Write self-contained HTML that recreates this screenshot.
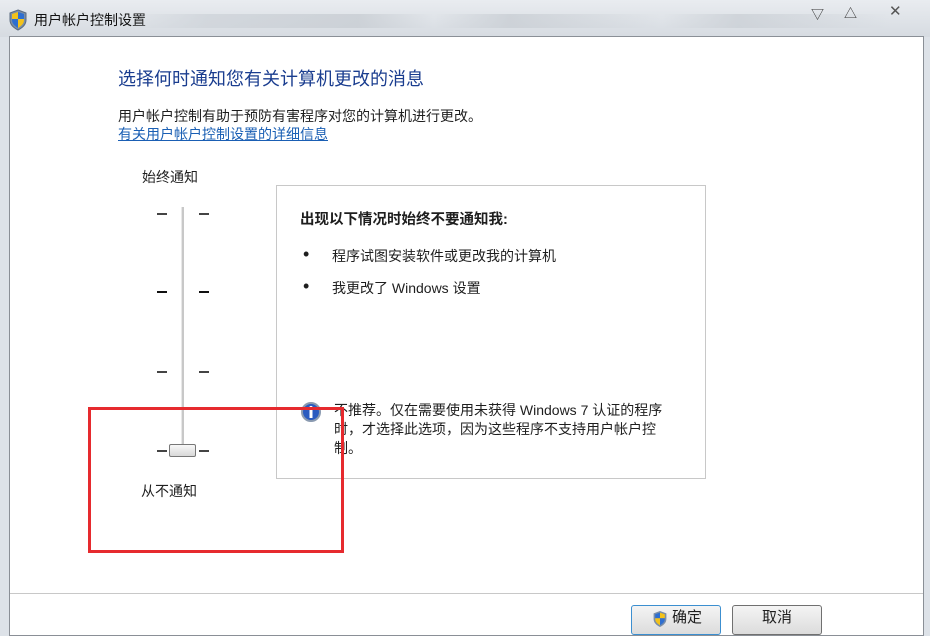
<!DOCTYPE html>
<html><head><meta charset="utf-8"><style>
*{margin:0;padding:0;box-sizing:border-box}
body{width:930px;height:624px;overflow:hidden;background:#dde2e8;font-family:"Liberation Sans","Noto Sans CJK SC",sans-serif;font-size:14px;color:#1e1e1e;position:relative}
.a{position:absolute}
.tb{left:0;top:0;width:930px;height:37px;background:linear-gradient(#e9ecf0,#d6dbe1)}
.client{left:9px;top:36px;width:915px;height:600px;background:#fff;border:1px solid #8a8f96}
.tick{position:absolute;width:10px;height:1.5px;background:#444}
.tick.b{height:2px;background:#111}
.btn{position:absolute;top:605px;height:30px;border:1px solid #707070;border-radius:3px;background:linear-gradient(#f4f4f4,#dcdcdc);font-size:15px;text-align:center;line-height:24px}
</style></head><body>
<div class="a tb"></div>
<svg class="a" style="left:8px;top:9px" width="20" height="22" viewBox="0 0 20 22"><path d="M10 1 L18 4 V11 C18 16 14 19 10 21 C6 19 2 16 2 11 V4 Z" fill="#7a8ea8" stroke="#5b6b80"/><path d="M10 3 L16 5 V10 H10Z" fill="#2f6fd0"/><path d="M4 5 L10 3 V10 H4Z" fill="#f3c21a"/><path d="M10 10 H16 V11 C16 15 13 17 10 19Z" fill="#f3c21a"/><path d="M4 10 H10 V19 C7 17 4 15 4 11Z" fill="#2f6fd0"/></svg>
<div class="a" style="left:34px;top:10px;font-size:14px;color:#111">用户帐户控制设置</div>
<div class="a" style="left:130px;top:14px;width:760px;height:14px;background:linear-gradient(90deg,transparent,#cfd4da 10%,#c8cdd3 30%,transparent 40%,#c9ced4 50%,transparent 70%,#cbd0d6 80%,transparent);opacity:.8"></div>
<div class="a" style="left:811px;top:4px;font-size:13px;color:#333">▽</div>
<div class="a" style="left:844px;top:3px;font-size:13px;color:#333">△</div>
<div class="a" style="left:889px;top:2px;font-size:15px;color:#555">✕</div>
<div class="a client"></div>
<div class="a" style="left:118px;top:65px;font-size:18px;color:#1a3d8f">选择何时通知您有关计算机更改的消息</div>
<div class="a" style="left:118px;top:106px;font-size:14px">用户帐户控制有助于预防有害程序对您的计算机进行更改。</div>
<div class="a" style="left:118px;top:124px;font-size:14px;color:#1a5fb4;text-decoration:underline">有关用户帐户控制设置的详细信息</div>
<div class="a" style="left:142px;top:167px">始终通知</div>
<div class="a" style="left:181px;top:207px;width:3px;height:243px;background:#c8c8c8;border-left:1px solid #e8e8e8"></div>
<div class="tick" style="left:157px;top:213px"></div><div class="tick" style="left:199px;top:213px"></div>
<div class="tick b" style="left:157px;top:291px"></div><div class="tick b" style="left:199px;top:291px"></div>
<div class="tick" style="left:157px;top:371px"></div><div class="tick" style="left:199px;top:371px"></div>
<div class="tick" style="left:157px;top:450px"></div><div class="tick" style="left:199px;top:450px"></div>
<div class="a" style="left:169px;top:444px;width:27px;height:13px;border:1px solid #777;border-radius:2px;background:linear-gradient(#f8f8f8,#d8d8d8)"></div>
<div class="a" style="left:141px;top:481px">从不通知</div>
<div class="a" style="left:276px;top:185px;width:430px;height:294px;border:1px solid #c8c8c8"></div>
<div class="a" style="left:300px;top:208px;font-weight:bold;font-size:14.5px">出现以下情况时始终不要通知我:</div>
<div class="a" style="left:303px;top:244px;font-size:18px">•</div><div class="a" style="left:332px;top:246px">程序试图安装软件或更改我的计算机</div>
<div class="a" style="left:303px;top:276px;font-size:18px">•</div><div class="a" style="left:332px;top:278px">我更改了 Windows 设置</div>
<svg class="a" style="left:301px;top:402px" width="20" height="20"><circle cx="10" cy="10" r="9" fill="#2a5bc0" stroke="#8a9ab0" stroke-width="2"/><rect x="8.5" y="8" width="3" height="8" fill="#fff"/><circle cx="10" cy="5.5" r="1.6" fill="#fff"/></svg>
<div class="a" style="left:334px;top:401px;width:370px;line-height:19px;white-space:nowrap">不推荐。仅在需要使用未获得 Windows 7 认证的程序<br>时，才选择此选项，因为这些程序不支持用户帐户控<br>制。</div>
<div class="a" style="left:88px;top:407px;width:256px;height:146px;border:3px solid #e62a2e"></div>
<div class="a" style="left:10px;top:593px;width:913px;height:1px;background:#c8c8c8"></div>
<div class="btn" style="left:631px;width:90px;border-color:#3c8fd0">
<svg style="position:absolute;left:20px;top:4px" width="16" height="18" viewBox="0 0 20 22"><path d="M10 1 L18 4 V11 C18 16 14 19 10 21 C6 19 2 16 2 11 V4 Z" fill="#7a8ea8"/><path d="M10 3 L16 5 V10 H10Z" fill="#f3c21a"/><path d="M4 5 L10 3 V10 H4Z" fill="#2f6fd0"/><path d="M10 10 H16 V11 C16 15 13 17 10 19Z" fill="#2f6fd0"/><path d="M4 10 H10 V19 C7 17 4 15 4 11Z" fill="#f3c21a"/></svg>
<span style="margin-left:22px">确定</span></div>
<div class="btn" style="left:732px;width:90px">取消</div>
</body></html>
